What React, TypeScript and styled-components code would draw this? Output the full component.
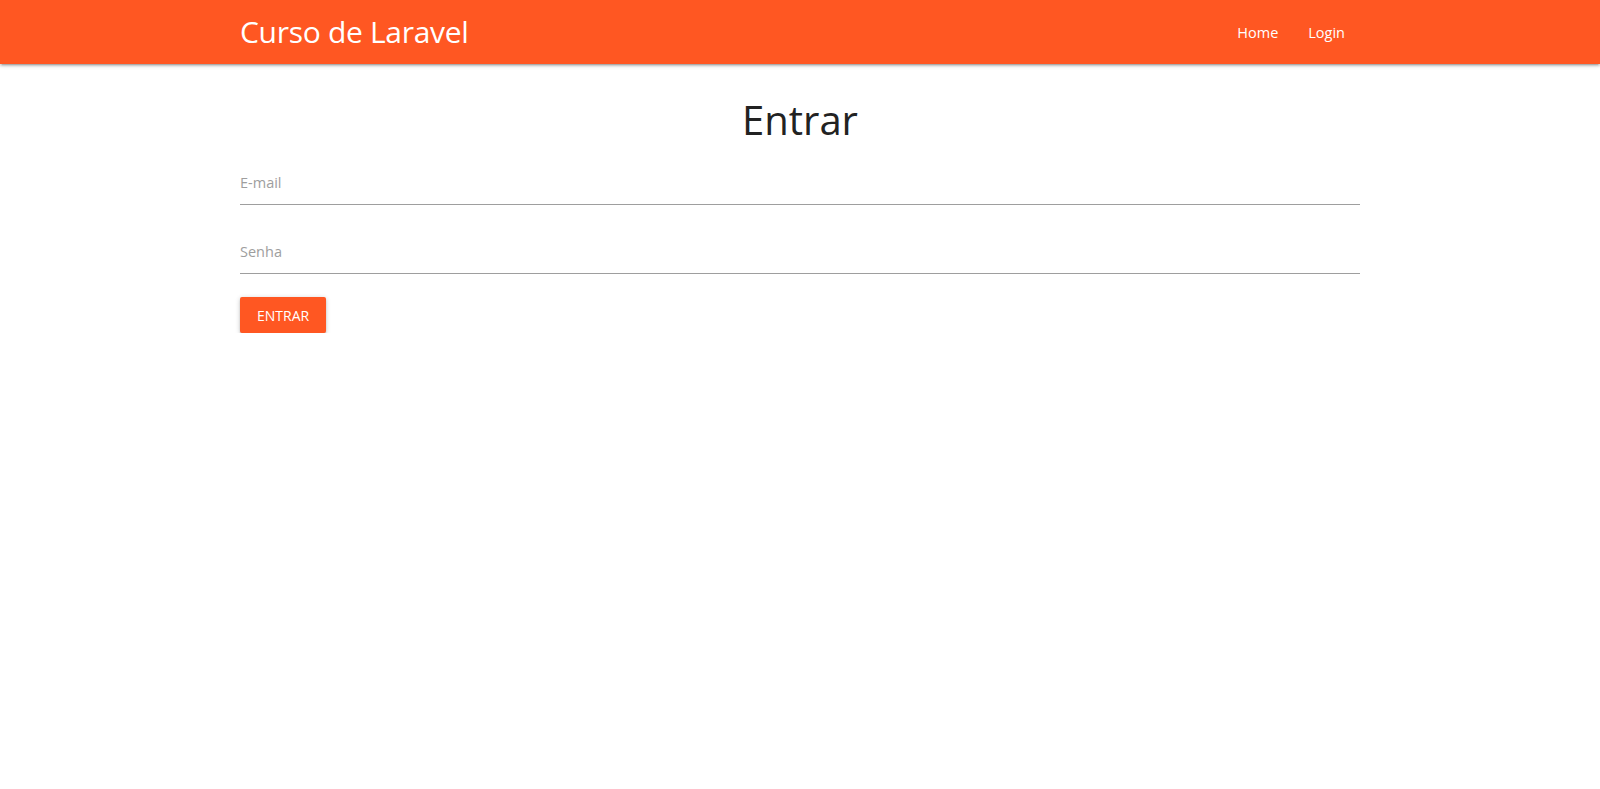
import React from "react";
import styled, { createGlobalStyle } from "styled-components";

const Global = createGlobalStyle`
  html, body { margin: 0; padding: 0; background: #fff; }
  body { font-family: "Open Sans", "Noto Sans", sans-serif; color: rgba(0,0,0,0.87); }
  * { box-sizing: border-box; }
`;

const Nav = styled.nav`
  height: 64px;
  background: #ff5722;
  box-shadow: 0 2px 2px 0 rgba(0,0,0,0.14), 0 3px 1px -2px rgba(0,0,0,0.12), 0 1px 5px 0 rgba(0,0,0,0.2);
  color: #fff;
`;

const Container = styled.div`
  width: 1120px;
  margin: 0 auto;
`;

const NavInner = styled(Container)`
  height: 100%;
  display: flex;
  align-items: center;
  justify-content: space-between;
`;

const Brand = styled.a`
  font-size: 30px;
  color: #fff;
  text-decoration: none;
  letter-spacing: -0.3px;
  margin-top: -2px;
`;

const Menu = styled.ul`
  list-style: none;
  margin: 0;
  padding: 0;
  display: flex;
  height: 100%;
`;

const MenuLink = styled.a`
  display: flex;
  align-items: center;
  height: 100%;
  padding: 0 15px;
  color: #fff;
  font-size: 14.5px;
  text-decoration: none;
`;

const Title = styled.h1`
  margin: 28px 0 8px;
  font-size: 40px;
  font-weight: 400;
  line-height: 56px;
  text-align: center;
  color: #222;
`;

const Form = styled.form`
  display: flex;
  flex-direction: column;
`;

const Field = styled.input`
  display: block;
  width: 100%;
  height: 49px;
  border: none;
  border-bottom: 1px solid #9e9e9e;
  background: transparent;
  outline: none;
  padding: 4px 0 0;
  font-family: inherit;
  font-size: 14.5px;
  margin-bottom: 20px;
  &::placeholder { color: #9e9e9e; }
`;

const Button = styled.button`
  align-self: flex-start;
  margin-top: 3px;
  height: 36px;
  padding: 0 17px;
  border: none;
  border-radius: 2px;
  background: #ff5722;
  color: #fff;
  font-family: inherit;
  font-size: 14px;
  text-transform: uppercase;
  box-shadow: 0 2px 2px 0 rgba(0,0,0,0.14), 0 3px 1px -2px rgba(0,0,0,0.12), 0 1px 5px 0 rgba(0,0,0,0.2);
  cursor: pointer;
`;

export default function App() {
  return (
    <>
      <Global />
      <Nav>
        <NavInner>
          <Brand href="#">Curso de Laravel</Brand>
          <Menu>
            <li><MenuLink href="#">Home</MenuLink></li>
            <li><MenuLink href="#">Login</MenuLink></li>
          </Menu>
        </NavInner>
      </Nav>
      <Container>
        <Title>Entrar</Title>
        <Form onSubmit={(e) => e.preventDefault()}>
          <Field type="email" placeholder="E-mail" />
          <Field type="password" placeholder="Senha" />
          <Button type="submit">Entrar</Button>
        </Form>
      </Container>
    </>
  );
}
